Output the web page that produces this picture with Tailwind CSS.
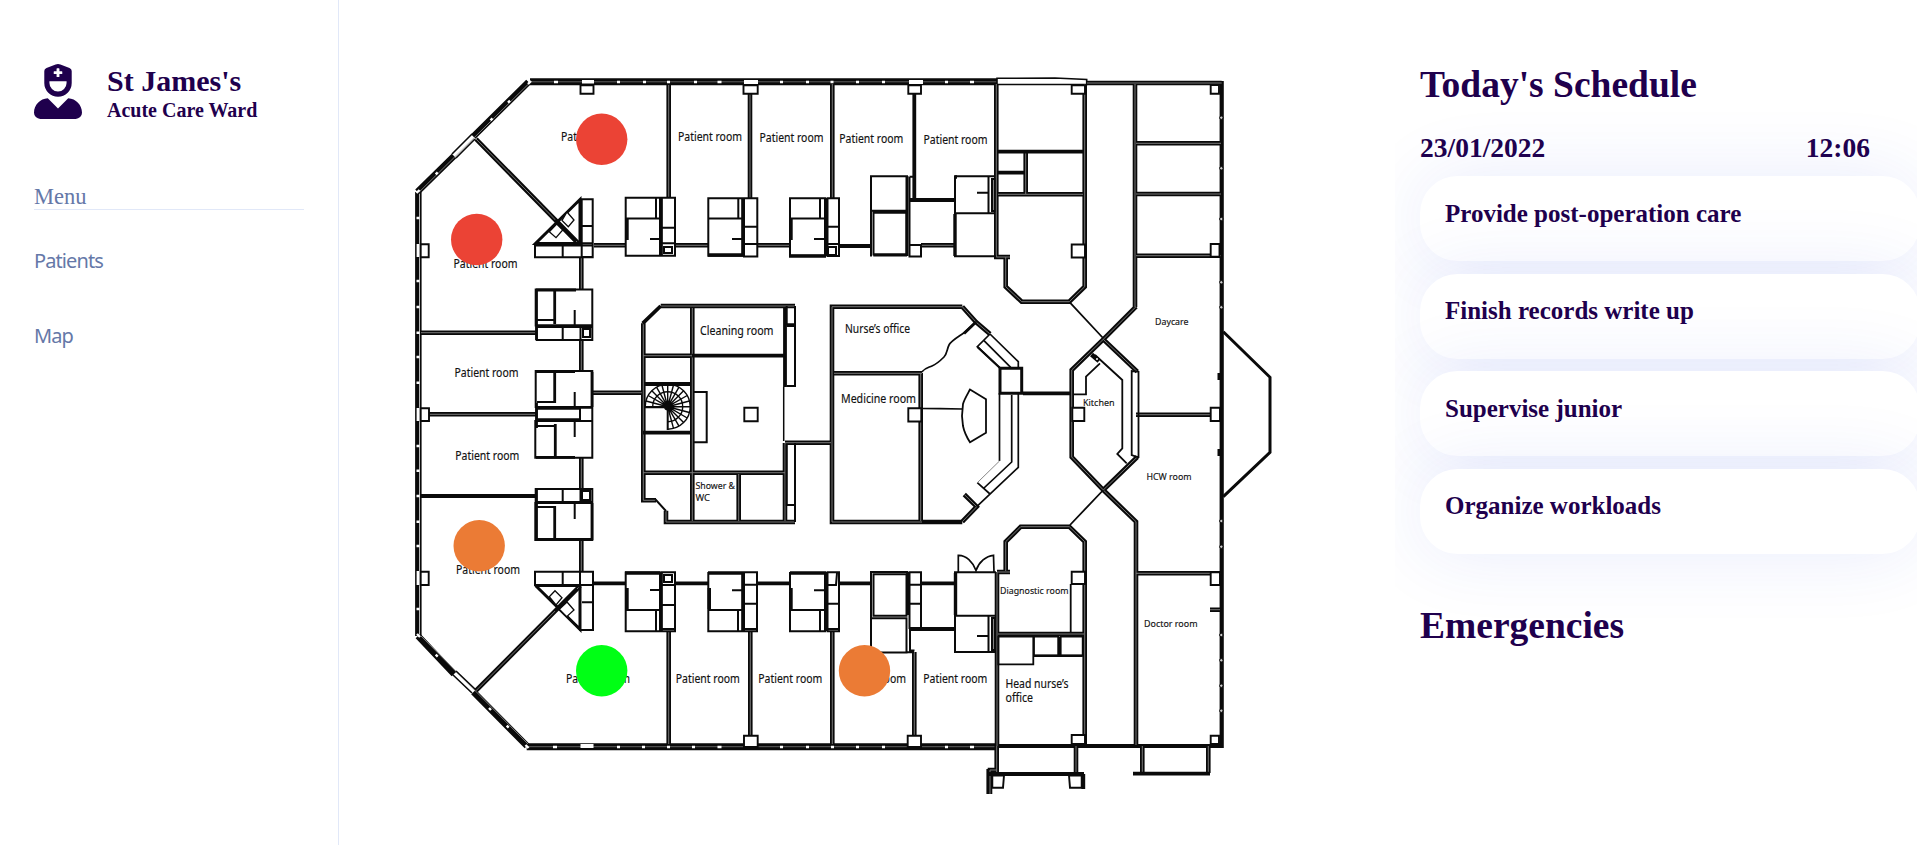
<!DOCTYPE html>
<html lang="en">
<head>
  <meta charset="UTF-8" />
  <meta name="viewport" content="width=device-width, initial-scale=1.0"/>
  <title>St James's - Map</title>
  <script src="https://cdn.jsdelivr.net/npm/@tailwindcss/browser@4"></script>
</head>
<body class="flex h-screen overflow-hidden bg-white font-['Liberation_Serif',serif] text-[#1f004d]">

  <!-- Sidebar -->
  <nav class="w-[339px] shrink-0 border-r border-[#e1e8f8] pl-[34px] pr-[34px] pt-16">
    <div class="flex gap-[25px]">
      <svg class="h-[55px] w-12" viewBox="0 0 448 512" fill="currentColor">
        <path d="M319.41,320,224,415.39,128.59,320C57.1,323.1,0,381.6,0,453.79A58.21,58.21,0,0,0,58.21,512H389.79A58.21,58.21,0,0,0,448,453.79C448,381.6,390.9,323.1,319.41,320ZM224,304A128,128,0,0,0,352,176V65.82a32,32,0,0,0-20.76-30L246.47,4.07a64,64,0,0,0-44.94,0L116.76,35.86A32,32,0,0,0,96,65.82V176A128,128,0,0,0,224,304ZM184,71.67a5,5,0,0,1,5-5h21.67V45a5,5,0,0,1,5-5h16.66a5,5,0,0,1,5,5V66.67H259a5,5,0,0,1,5,5V88.33a5,5,0,0,1-5,5H237.33V115a5,5,0,0,1-5,5H215.67a5,5,0,0,1-5-5V93.33H189a5,5,0,0,1-5-5ZM144,160H304v16a80,80,0,0,1-160,0Z"/>
      </svg>
      <div class="font-bold">
        <h1 class="text-[30px] leading-[34px]">St James's</h1>
        <h2 class="text-[20px] leading-6">Acute Care Ward</h2>
      </div>
    </div>

    <p class="mt-[63px] border-b border-[#e1e8f8] text-[22.5px] leading-6 text-[#6578a8]">Menu</p>
    <ul class="mt-9 flex flex-col gap-[45px] font-['Noto_Sans',sans-serif] text-[20px] leading-[30px] tracking-[-0.9px] text-[#6578a8]">
      <li><a href="#patients">Patients</a></li>
      <li><a href="#map">Map</a></li>
    </ul>
  </nav>

  <!-- Floor plan -->
  <main class="flex-1 pl-[61px] pt-[60px]">
    <svg id="map" class="h-[750px] w-[880px]" viewBox="400 60 880 750" fill="none" stroke="#0a0a0a">
      <defs>
        <!-- double walls: drawn dark first, then a light core -->
        <path id="walls" d="M668.7 85V198M750 94V198M832.3 84V198M996.3 84V257H1010M1084.7 84V286.7L1069.3 301.7H1021.7L1005.7 286.7V257
          M476 139L578.3 243.3M594 245.3H625M675 245.3H708M757 245.3H789M921 245.3H954
          M581.3 257V289M581.3 340V370M581.3 458V489M581.3 540V571
          M421 332.7H536M429 414.3H536M580 586L476 690.7
          M668.7 631V744M750.3 631V735M832.3 631V744M914.3 652V735M997 572V746
          M1087 83H1221.7M1135 84V307M1136 143.3H1221M1136 194H1221M1136 255.7H1221M998 194.3H1083M1025.7 153V194
          M795 306H660.7M643.3 323.3V500.3H656M666 510.7V522H795M692.3 308V521M643 355.7H692M643 472.7H785M785 442.7H831M785 443V521M738.7 474V521
          M962.3 306.7H832V522H962.3M834 373.3H922M920.7 373V521M962.3 306.7L976 322L990 334M962.3 521.7L976.7 506.7L964.3 494.5
          M1103.3 339.3L1071.7 370V457L1103.3 490L1137.3 457M1103.3 339.3L1137.3 371.7M1136 306.7L1103.3 339.3M1103.3 490L1136 521.7V745
          M1136 414.7H1210M1136 573.3H1221M1210 609.7H1220M998 634H1084M1010 572H997M1005.7 571V541.7L1020.7 526.7H1069.3L1084.7 541.7V745
          M996.7 746V773M1076 746V773M1142.3 746V773M1208.3 746V773M990 794V770H997M592.5 392.7H641.7"/>
        <path id="shell" d="M530 81.8H997M997 746.7H526.7"/>
      </defs>

      <!-- outer shell -->
      <use href="#shell" stroke-width="7"/>
      <use href="#shell" stroke="#777" stroke-width="0.8"/>
      <path stroke-width="6.5" d="M528.5 82L473.3 136.5M454 156L417.5 191.7M418 636L454 674M473.5 692L527 746"/>
      <path stroke="#999" stroke-width="0.8" d="M529.5 83L418.5 192.7M420 635L528 744"/>
      <path stroke-width="4.2" d="M417.2 192V636"/>
      <path stroke-width="1.6" d="M420.8 192V636M452 154L472 134M456 158L475 139M452 674L472 693M456 671L476 690"/>
      <path stroke-width="4.2" d="M1221.7 81V748M997 746H1223.5"/>
      <path stroke-width="1.6" fill="#fff" d="M997 78.3L1055 78L1086.7 79.5V84.5H997Z"/>

      <!-- window joints -->
      <path stroke="#fff" stroke-width="2.4" d="M554 82h4M617 82h3M643 82h3M667 82h3M694 82h3M717.5 82h4M780 82h3M806 82h3M830.5 82h3M856 82h3M882 82h3M945 82h3M970 82h4
        M553 747h4M617 747h3M642 747h3M667 747h3M692 747h3M717.5 747h4M780 747h3M806 747h3M831 747h3M856 747h3M882 747h3M945 747h3M970 747h4
        M416.5 218h3M416.5 281h3M416.5 307h3M416.5 332.7h3M416.5 357h3M416.5 382.7h3M416.5 446h3M416.5 470.7h3M416.5 496h3M416.5 521.7h3M416.5 546h3M416.5 609h3
        M508 102.7l2-2M490.5 120.3l2-2M435.7 174.3l2-2M435.7 654.7l2 2M489 708l2 2M506.7 725.7l2 2M416.5 193l3-3M417 634l3 3M528 84l3-3M525.5 745l3 3"/>
      <path fill="#fff" stroke="none" d="M582 80h12v3.5h-12zM744 80h14v4h-14zM909 80h14v4h-14zM580.5 744h13v4h-13zM416.6 244h2.8v13h-2.8zM416.6 408h2.8v13h-2.8zM416.6 571h2.8v14h-2.8z"/>
      <g fill="#ccc" stroke-width="1">
        <circle cx="1221.3" cy="117.7" r="1.7"/><circle cx="1221.3" cy="168.3" r="1.7"/><circle cx="1221.3" cy="219" r="1.7"/>
        <circle cx="1221.3" cy="282.3" r="1.7"/><circle cx="1221.3" cy="307.3" r="1.7"/><circle cx="1221.3" cy="521" r="1.7"/>
        <circle cx="1221.3" cy="546.7" r="1.7"/><circle cx="1221.3" cy="635" r="1.7"/><circle cx="1221.3" cy="660.3" r="1.7"/>
        <circle cx="1221.3" cy="685.7" r="1.7"/><circle cx="1221.3" cy="710.7" r="1.7"/>
      </g>
      <path stroke-width="3" d="M1219 373V380M1219 449V456"/>

      <!-- inner walls -->
      <use href="#walls" stroke-width="4.6"/>
      <use href="#walls" stroke="#777" stroke-width="1"/>
      <path stroke-width="3.8" d="M914.3 94V198M839 246H871M909.3 200H955M998 151.7H1083M998 172.7H1025M421 496H536
        M593 583.3H625.7M675 583.3H708M757 583.3H790M839 583.3H871M921 583.3H954M909 629H955
        M660.7 306L642.7 323.3M692 355.7H785M644 384H691M643 432.7H691M785 308V387M922 522H962M1023 393.3H1071
        M988 774H1084M1133 773.7H1210M1083.3 774V789"/>
      <path stroke-width="3" d="M1223.3 331.7L1270 377.3V452.3L1223.3 496.7M1000 368.3H1021.7V393.3H1000ZM873.3 255H907M907 176V256"/>

      <!-- columns -->
      <g stroke-width="1.9" fill="#fff">
        <path d="M580.5 85.3H593.5V93.7H580.5ZM743.5 85.3H757.7V93.7H743.5ZM908.3 85.3H921V93.7H908.3ZM1071.7 85.3H1085V93.7H1071.7ZM1210.7 85H1219V93.7H1210.7Z"/>
        <path d="M420.7 244.3H428.7V257.3H420.7ZM420.7 408.3H429V421H420.7ZM420.7 571.7H428.7V585H420.7Z"/>
        <path d="M744 735.7H757.7V747H744ZM907.7 735.7H921V747H907.7ZM1071.7 735H1085V744H1071.7ZM1210.7 735.7H1219V744H1210.7Z"/>
        <path d="M1071.7 244.5H1085V257.5H1071.7ZM1210.7 244H1219.5V256.7H1210.7ZM1210.7 407.7H1220V421H1210.7ZM1210.7 572.3H1220V585H1210.7ZM1071.7 571.7H1085V584H1071.7Z"/>
        <path d="M744.3 407.7H757.7V421.3H744.3ZM908.3 408.3H921.3V421.5H908.3ZM1072.3 407.7H1084.3V421H1072.3Z"/>
        <path d="M992.3 775.5H1004L1003 787.7H992.3ZM1069 775.5H1081.7V787.7H1070Z"/>
      </g>

      <!-- bathrooms, top row -->
      <path stroke-width="2" d="M625.7 197.7H660V255.7H625.7ZM626 218.5H660M656 198V218M650 239H660M661.5 197.7H675V255.7H661.5ZM662 227.7H675M662 243.3H675M664 247H672V253H664Z
        M708.3 198.3H742.3V255.7H708.3ZM708 218.5H742M738.3 198V218M732 239H742M744 198.3H757.3V256.5H744ZM744 226.7H757M744 244H757
        M790 198.3H825V255.7H790ZM790 218.5H825M820 198V218M814 239H824M827.5 198.3H839V256H827.5ZM827 226.7H839M827 244H839M828 247H836V255H828Z
        M871 176.3H907V210.7H871ZM873.5 212.7H906.5V254.5H873.5ZM871 211V256.5M909.5 176.7H915V198M909.5 177V256.5H921V245H909.5
        M996 256.3H955V176.3H995M955 213.3H995M988.5 177V213M992 179H994.5V211H992ZM977 192.7H988"/>
      <!-- bathrooms, bottom row -->
      <path stroke-width="2" d="M625.7 572.5H660V631.3H625.7ZM626 610H660M656 610V631M650 590H660M661.5 572.3H675V631.3H661.5ZM662 585H675M662 605H675M662 629H675M664 575H672V582H664Z
        M708.3 573H742.3V631.3H708.3ZM708 610H742M738 610V631M732 590.3H742M744 572.3H757V631.3H744ZM744 584.7H757M744 603.7H757M744 629H757
        M790 573H825V631.3H790ZM790 610H825M820 610V631M814 590.3H824M827.5 572.3H839V631.3H827.5ZM827 585H836L837 573M827 603.7H839M827 629H839
        M873.5 574.3H906.5V615.7H873.5ZM871 618.3H906.5V652.5H871ZM871 618V572H908M909.5 572.3H921V628H909.5ZM909 584.7H921M909 603.7H921M910 630V650.5H914.5
        M996 572.3H955V652H995M955 615.7H995M988.5 616V652M992 618H994.5V650H992ZM977 636H988M921 585V628M907 652.3H914"/>
      <path stroke-width="3.4" d="M661 198V256M743.3 198V256M825.8 198V256M661 572V631M743.3 572V631M825.8 572V631M627 219V240M791 219V240M627 588V609M709.3 588V609M791 588V609
        M708 255H743M789 256H826M625 573H660M708 573H743M790 573H826M955 214V256M955.5 573V615M907.8 572V615M955 177H957"/>

      <!-- bathrooms, left side -->
      <path stroke-width="2" d="M535.7 289.5H592.3V325.5H535.7ZM537 320H555M574.7 310V325M536.7 327H592.3V340H536.7ZM562.7 327V340M580.5 327V340M583 329H590V337H583Z
        M535.7 371H592.3V407H535.7ZM537 402H555M574.7 392V407M536.7 408.7H580V419.3H536.7ZM580 407.7H592.3V421H580Z
        M535.3 421H592.3V457.7H535.3ZM537 426H555M574.7 421V437
        M535.7 489H592.3V502H535.7ZM562.7 489V502M580.5 489V502M582 491H590V500H582ZM535.3 503H592.3V540H535.3ZM537 507H555M574.7 503V519"/>
      <path stroke-width="2.8" d="M554.7 290V324M554.7 371V403M555.3 424V457M554.7 506V539M536 290H576M536 371.5H575M536 457.3H575M536 539.5H592M536 325.8H592M536 407.7H580M592 372V407M592 503V540M536.5 289V340M536.5 403V428M536.5 489V540"/>

      <!-- corner closets -->
      <path stroke-width="2" d="M581.7 199.3H592.7V257H581.7ZM582 226H592M582 243.3H592M535 245.5H592.7V257.3H535ZM562.7 246V257
        M535 571.7H593V585H535ZM562.7 572V585M580 572V630M581.7 585H593V630H579M582 602.3H593"/>
      <path stroke-width="3" d="M580 199.5L535.5 243.5H580ZM535.5 585.5H580V629.3L535.5 585.5"/>
      <path stroke-width="1.3" fill="#fff" d="M567 212L574 220L568.3 226.7L562 220.5ZM549.3 231.7L556 237.7L562.7 230L556.7 224ZM549.3 596.7L555 590.7L562 597.7L556 605ZM567 602L574 610L566.7 616.7L559.3 609.3Z"/>
      <path stroke-width="3" d="M555 220L576 241.5M555 611L577 589"/>

      <!-- stairwell and service block -->
      <path stroke-width="2" d="M786.7 306V324.3H795V306M786.7 326H795V386H786.7M786.7 444V505H795V443M795 505V522M694 392H706.7V442.3H694M655.5 499.5L666 511"/>
      <path stroke-width="1.5" d="M783.7 387V441"/>
      <g stroke-width="1.4">
        <path d="M645.2 406.7A22.5 22.5 0 1 1 667.7 429.2M652.7 406.7A15 15 0 1 1 667.7 421.7"/>
        <path d="M667.7 406.7L645.2 406.7M667.7 406.7L646 401M667.7 406.7L648.2 395.5M667.7 406.7L651.8 390.8M667.7 406.7L656.5 387.2M667.7 406.7L661.9 385M667.7 406.7V384.2M667.7 406.7L673.5 385M667.7 406.7L679 387.2M667.7 406.7L683.6 390.8M667.7 406.7L687.2 395.5M667.7 406.7L689.4 401M667.7 406.7H690.2M667.7 406.7L689.4 412.5M667.7 406.7L687.2 418M667.7 406.7L683.6 422.6M667.7 406.7L679 426.2M667.7 406.7L673.5 428.4"/>
        <circle cx="667.7" cy="406.7" r="3" fill="#0a0a0a"/>
      </g>
      <path stroke-width="2" d="M645 407.2H667.7V430"/>

      <!-- nurse's office -->
      <path stroke-width="1.7" d="M976 322L963.3 333.3C958 337 951 341 949 345S947 354 944 357S937 364 932 366S925 368 921.7 372M922 408.5L940 408.7L962.5 409
        M990 334L1018.3 361.7V368M990 334L977.3 346.7L1000 368M984 340.7L1010.7 367.3
        M999.5 393V461M1011.7 395V462L984 488M1018.3 394V467.3L976.7 506.7M977.3 482.7L990 494"/>
      <path stroke="#888" stroke-width="1" d="M999.5 461L977.3 482.7"/>
      <path stroke-width="1.8" d="M970 389.5L986 399.3V432.7L970 442.3C966 436 964 431 963 426L962 416L963 404C964 400 967 395 970 389.5Z"/>
      <path stroke-width="3" d="M976 322L964 333.5"/>
      <path stroke-width="2.2" d="M977.5 347L1000 368"/>

      <!-- kitchen -->
      <path stroke-width="1.8" d="M1070 302.7L1103 338M1103.3 490L1070 525M1095 355L1122.3 380V448.3L1117.3 454L1126.7 463.3M1100 363.3L1086 376.7V394.3H1073.3M1131.7 371V455L1137.5 457H1138.5V371.7Z"/>
      <path stroke-width="4.5" d="M1091.5 354.5L1099 361"/>
      <circle cx="1097" cy="359" r="1" fill="#fff" stroke="none"/>

      <!-- diagnostic room, head nurse's office, entrance doors -->
      <path stroke-width="1.8" d="M1070.7 584V633M998.3 636.7H1033.3V664.3H998.3ZM1034 636.7H1058.3V655.7H1034ZM1060.7 636.7H1082.7V655.7H1060.7Z"/>
      <path stroke-width="2.6" d="M1034 655.7H1082.7M1059 637V656M987.7 769V794"/>
      <path stroke-width="1.7" d="M958.3 572V555.3C966 555 973 562 976 570.5C979 562 986 556 993.5 555.3L994 572"/>

      <!-- room names -->
      <g fill="#111" stroke="#111" stroke-width="0.15" class="font-['Noto_Sans',sans-serif]" font-size="12">
        <text x="561" y="140.7" textLength="64" lengthAdjust="spacingAndGlyphs">Patient room</text>
        <text x="678" y="141.3" textLength="64" lengthAdjust="spacingAndGlyphs">Patient room</text>
        <text x="759.5" y="142.3" textLength="64" lengthAdjust="spacingAndGlyphs">Patient room</text>
        <text x="839.3" y="143" textLength="64" lengthAdjust="spacingAndGlyphs">Patient room</text>
        <text x="923.5" y="144.4" textLength="64" lengthAdjust="spacingAndGlyphs">Patient room</text>
        <text x="453.5" y="268" textLength="64" lengthAdjust="spacingAndGlyphs">Patient room</text>
        <text x="454.5" y="377.3" textLength="64" lengthAdjust="spacingAndGlyphs">Patient room</text>
        <text x="455.3" y="459.8" textLength="64" lengthAdjust="spacingAndGlyphs">Patient room</text>
        <text x="456" y="574.2" textLength="64" lengthAdjust="spacingAndGlyphs">Patient room</text>
        <text x="566" y="683.2" textLength="64" lengthAdjust="spacingAndGlyphs">Patient room</text>
        <text x="675.8" y="683.2" textLength="64" lengthAdjust="spacingAndGlyphs">Patient room</text>
        <text x="758.3" y="683.2" textLength="64" lengthAdjust="spacingAndGlyphs">Patient room</text>
        <text x="842" y="683.2" textLength="64" lengthAdjust="spacingAndGlyphs">Patient room</text>
        <text x="923.3" y="683.2" textLength="64" lengthAdjust="spacingAndGlyphs">Patient room</text>
        <text x="700" y="335" textLength="73.5" lengthAdjust="spacingAndGlyphs">Cleaning room</text>
        <text x="845" y="332.5" textLength="65" lengthAdjust="spacingAndGlyphs">Nurse’s office</text>
        <text x="841" y="402.7" textLength="75" lengthAdjust="spacingAndGlyphs">Medicine room</text>
        <text x="1005.5" y="688.3" textLength="63" lengthAdjust="spacingAndGlyphs">Head nurse’s</text>
        <text x="1005.5" y="702.3" textLength="27.5" lengthAdjust="spacingAndGlyphs">office</text>
        <g font-size="9.8">
          <text x="695.5" y="489" textLength="39.5" lengthAdjust="spacingAndGlyphs">Shower &amp;</text>
          <text x="695.5" y="501" textLength="14.5" lengthAdjust="spacingAndGlyphs">WC</text>
          <text x="1155" y="325.3" textLength="33.5" lengthAdjust="spacingAndGlyphs">Daycare</text>
          <text x="1083" y="405.5" textLength="31.5" lengthAdjust="spacingAndGlyphs">Kitchen</text>
          <text x="1146.5" y="480" textLength="45" lengthAdjust="spacingAndGlyphs">HCW room</text>
          <text x="1000" y="593.8" textLength="68.5" lengthAdjust="spacingAndGlyphs">Diagnostic room</text>
          <text x="1144" y="627.3" textLength="53.5" lengthAdjust="spacingAndGlyphs">Doctor room</text>
        </g>
      </g>

      <!-- patient status markers -->
      <g stroke="none">
        <circle cx="601.7" cy="139.3" r="25.7" fill="#eb4335"/>
        <circle cx="476.7" cy="239.5" r="25.7" fill="#eb4335"/>
        <circle cx="479.2" cy="545.8" r="25.7" fill="#eb7b35"/>
        <circle cx="864.5" cy="670.8" r="25.7" fill="#eb7b35"/>
        <circle cx="601.7" cy="670.8" r="25.7" fill="#00ff15"/>
      </g>
    </svg>
  </main>

  <!-- Schedule -->
  <aside class="w-[522px] shrink-0 overflow-hidden pl-[25px] pt-[63px] font-bold">
    <h2 class="text-[37.5px] leading-[44px]">Today's Schedule</h2>
    <div class="mt-[25px] flex w-[450px] justify-between text-[27.5px] leading-8">
      <span>23/01/2022</span>
      <span>12:06</span>
    </div>
    <ul class="mt-3 flex w-[500px] flex-col gap-[12.5px] text-[25px] leading-[30px]">
      <li class="h-[85px] rounded-[37.5px] bg-white pl-[25px] pt-[22.5px] shadow-[0_0_75px_rgba(35,65,225,0.1)]">Provide post-operation care</li>
      <li class="h-[85px] rounded-[37.5px] bg-white pl-[25px] pt-[22.5px] shadow-[0_0_75px_rgba(35,65,225,0.1)]">Finish records write up</li>
      <li class="h-[85px] rounded-[37.5px] bg-white pl-[25px] pt-[22.5px] shadow-[0_0_75px_rgba(35,65,225,0.1)]">Supervise junior</li>
      <li class="h-[85px] rounded-[37.5px] bg-white pl-[25px] pt-[22.5px] shadow-[0_0_75px_rgba(35,65,225,0.1)]">Organize workloads</li>
    </ul>
    <h2 class="mt-[50px] text-[37.5px] leading-[44px]">Emergencies</h2>
  </aside>

</body>
</html>
